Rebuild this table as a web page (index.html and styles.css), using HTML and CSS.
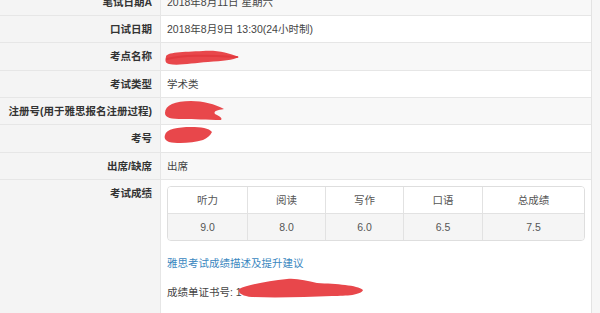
FILE: index.html
```html
<!DOCTYPE html>
<html lang="zh-CN">
<head>
<meta charset="utf-8">
<title>雅思成绩</title>
<link rel="stylesheet" href="styles.css">
</head>
<body>
<div class="sheet">
  <div class="row odd">
    <div class="label">笔试日期A</div>
    <div class="value">2018年8月11日 星期六</div>
  </div>
  <div class="row">
    <div class="label">口试日期</div>
    <div class="value">2018年8月9日 13:30(24小时制)</div>
  </div>
  <div class="row odd">
    <div class="label">考点名称</div>
    <div class="value">
      <svg class="scribble s1" width="78" height="17" viewBox="0 0 78 17"><path d="M3,8 C3,3 20,3 40,2 C55,1 65,4 76,8 C70,11 60,12 45,13 C30,14 15,17 6,15 C2,14 2,11 3,8 Z"/><path d="M4,10 C20,6 40,6 74,8" class="st"/></svg>
    </div>
  </div>
  <div class="row">
    <div class="label">考试类型</div>
    <div class="value">学术类</div>
  </div>
  <div class="row odd">
    <div class="label">注册号(用于雅思报名注册过程)</div>
    <div class="value">
      <svg class="scribble s2" width="63" height="22" viewBox="0 0 63 22"><path d="M2,14 C2,6 12,2 28,2 C40,2 52,5 61,10 C55,11 50,12 52,15 C56,17 60,19 58,21 C45,21 30,20 20,20 C8,20 2,19 2,14 Z"/></svg>
    </div>
  </div>
  <div class="row">
    <div class="label">考号</div>
    <div class="value">
      <svg class="scribble s3" width="51" height="18" viewBox="0 0 51 18"><path d="M2,9 C3,3 15,1 28,1 C38,1 46,2 49,6 C47,10 44,12 40,14 C30,17 15,18 6,16 C2,14 1,12 2,9 Z"/></svg>
    </div>
  </div>
  <div class="row odd">
    <div class="label">出席/缺席</div>
    <div class="value">出席</div>
  </div>
  <div class="row last">
    <div class="label">考试成绩</div>
    <div class="value scores-cell">
      <div class="scores">
        <div class="sc head">听力</div>
        <div class="sc head">阅读</div>
        <div class="sc head">写作</div>
        <div class="sc head">口语</div>
        <div class="sc head">总成绩</div>
        <div class="sc body">9.0</div>
        <div class="sc body">8.0</div>
        <div class="sc body">6.0</div>
        <div class="sc body">6.5</div>
        <div class="sc body">7.5</div>
      </div>
      <a class="link" href="#">雅思考试成绩描述及提升建议</a>
      <div class="cert">成绩单证书号: 1<svg class="scribble s4" width="127" height="22" viewBox="0 0 127 22"><path d="M2,12 C10,8 30,4 50,2 C60,1 70,4 80,6 C100,7 120,8 126,13 C124,18 110,19 95,19 C70,20 40,21 15,20 C5,19 1,16 2,12 Z"/></svg></div>
    </div>
  </div>
</div>
</body>
</html>
```

FILE: styles.css
```css
html, body {
  margin: 0;
  padding: 0;
}
body {
  background: #f6f6f6;
  font-family: "Liberation Sans", "Noto Sans CJK SC", sans-serif;
  font-size: 10.5px;
  color: #555;
  overflow: hidden;
  height: 313px;
}
.sheet {
  width: 591px;
  background: #fff;
  border-right: 1px solid #e3e3e3;
  margin-top: -11.33px;
  height: 324.33px;
  overflow: hidden;
}
.row {
  display: flex;
  border-bottom: 1px solid #e6e6e6;
}
.label {
  width: 152px;
  flex: none;
  padding: 7px 8px 7px 0;
  line-height: 12.33px;
  background: #f4f4f4;
  border-right: 1px solid #e6e6e6;
  text-align: right;
  font-weight: bold;
  color: #333;
}
.value {
  flex: 1;
  padding: 7px 6px;
  line-height: 12.33px;
  color: #444;
}
.row.odd .value {
  background: #f8f8f8;
}
.row.last {
  border-bottom: none;
  height: 133px;
}
.scribble {
  display: block;
  fill: #e8474b;
}
.scribble .st {
  fill: none;
  stroke: #e23a3f;
  stroke-width: 2;
  stroke-linecap: round;
}
.s1 { margin: -1.33px 0 -3.33px -4px; }
.s2 { margin: -6px 0 -3.67px -4px; }
.s3 { margin: -6.33px 0 0.67px -4px; }
.s4 {
  display: inline-block;
  vertical-align: top;
  margin: -9px 0 -1px -5px;
}
.scores-cell {
  padding-top: 6px;
}
.scores {
  display: grid;
  grid-template-columns: 79px 78px 78px 79px 102px;
  width: 416px;
  border: 1px solid #dedede;
  border-radius: 4px;
  overflow: hidden;
}
.sc {
  box-sizing: border-box;
  padding: 7px 0;
  line-height: 12px;
  text-align: center;
  color: #555;
  border-left: 1px solid #e2e2e2;
}
.sc:nth-child(5n+1) {
  border-left: none;
}
.sc.head {
  background: #fff;
}
.sc.body {
  background: #f5f5f5;
  border-top: 1px solid #e2e2e2;
}
.link {
  display: block;
  margin-top: 16px;
  color: #3a87c0;
  text-decoration: none;
}
.cert {
  margin-top: 17px;
  color: #444;
}
```
